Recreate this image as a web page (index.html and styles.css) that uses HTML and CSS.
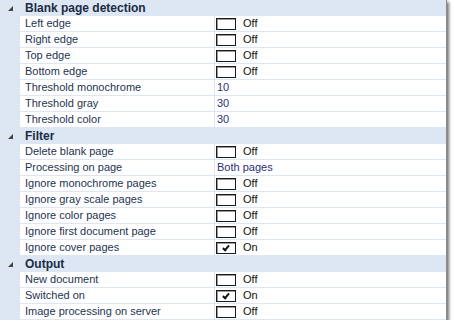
FILE: index.html
```html
<!DOCTYPE html>
<html lang="en">
<head>
  <meta charset="UTF-8">
  <title>Properties</title>
  <link rel="stylesheet" href="styles.css">
</head>
<body>

<div class="panel">
  <div class="cat"><span class="tri"></span>Blank page detection</div>
  <div class="row"><div class="name">Left edge</div><div class="val"><span class="cb"></span>Off</div></div>
  <div class="row"><div class="name">Right edge</div><div class="val"><span class="cb"></span>Off</div></div>
  <div class="row"><div class="name">Top edge</div><div class="val"><span class="cb"></span>Off</div></div>
  <div class="row"><div class="name">Bottom edge</div><div class="val"><span class="cb"></span>Off</div></div>
  <div class="row"><div class="name">Threshold monochrome</div><div class="val num">10</div></div>
  <div class="row"><div class="name">Threshold gray</div><div class="val num">30</div></div>
  <div class="row"><div class="name">Threshold color</div><div class="val num">30</div></div>

  <div class="cat"><span class="tri"></span>Filter</div>
  <div class="row"><div class="name">Delete blank page</div><div class="val"><span class="cb"></span>Off</div></div>
  <div class="row"><div class="name">Processing on page</div><div class="val num">Both pages</div></div>
  <div class="row"><div class="name">Ignore monochrome pages</div><div class="val"><span class="cb"></span>Off</div></div>
  <div class="row"><div class="name">Ignore gray scale pages</div><div class="val"><span class="cb"></span>Off</div></div>
  <div class="row"><div class="name">Ignore color pages</div><div class="val"><span class="cb"></span>Off</div></div>
  <div class="row"><div class="name">Ignore first document page</div><div class="val"><span class="cb"></span>Off</div></div>
  <div class="row"><div class="name">Ignore cover pages</div><div class="val"><span class="cb on"></span>On</div></div>

  <div class="cat"><span class="tri"></span>Output</div>
  <div class="row"><div class="name">New document</div><div class="val"><span class="cb"></span>Off</div></div>
  <div class="row"><div class="name">Switched on</div><div class="val"><span class="cb on"></span>On</div></div>
  <div class="row"><div class="name">Image processing on server</div><div class="val"><span class="cb"></span>Off</div></div>
</div>

</body>
</html>
```

FILE: styles.css
```css
body {
  margin: 0;
  background: #fff;
  font-family: "Liberation Sans", Arial, sans-serif;
  font-size: 11px;
}

.panel {
  width: 447px;
  background: #dde7f3;
  box-shadow: 2px 2px 3px rgba(0, 0, 0, 0.55);
  border-right: 1px solid #8a8a8a;
  box-sizing: border-box;
}

.cat {
  height: 16px;
  line-height: 16px;
  padding-left: 25px;
  position: relative;
  font-weight: bold;
  font-size: 12px;
  color: #1b2b44;
  border-bottom: 1px solid #dde7f3;
  box-sizing: border-box;
}

.tri {
  position: absolute;
  left: 8px;
  top: 6px;
  width: 0;
  height: 0;
  border-left: 5px solid transparent;
  border-bottom: 5px solid #444;
}

.row {
  display: flex;
  height: 16px;
  padding-left: 20px;
}

.name, .val {
  background: #fff;
  border-bottom: 1px solid #dde7f3;
  line-height: 15px;
  white-space: nowrap;
}

.name {
  width: 195px;
  padding-left: 5px;
  box-sizing: border-box;
  border-right: 1px solid #dde7f3;
  color: #1e3350;
}

.val {
  flex: 1;
  display: flex;
  align-items: center;
  padding-left: 1px;
  color: #111;
}

.val.num {
  padding-left: 2px;
  color: #2b2f7a;
}

.cb {
  width: 18px;
  height: 10px;
  border: 1px solid #1a1a1a;
  box-shadow: inset 1px 1px 0 #9a9a9a;
  background: #fff;
  margin-right: 7px;
  position: relative;
}

.cb.on::after {
  content: "";
  position: absolute;
  left: 7px;
  top: 1px;
  width: 2px;
  height: 5px;
  border: solid #111;
  border-width: 0 2px 2px 0;
  transform: rotate(40deg);
}
```
